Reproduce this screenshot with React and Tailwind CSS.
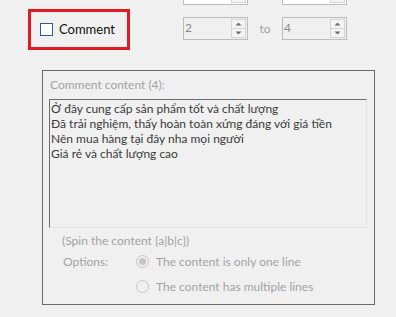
import React from 'react';

const Arrow = ({ up }) => (
  <svg width="7" height="4" viewBox="0 0 7 4" className="block">
    {up ? <path d="M0.5 3.5 L3.5 0.5 L6.5 3.5 Z" fill="#6b6b6b" /> : <path d="M0.5 0.5 L3.5 3.5 L6.5 0.5 Z" fill="#6b6b6b" />}
  </svg>
);

const SpinBox = ({ value, white }) => (
  <div className={`w-[65px] h-[23px] border border-[#bcbcbc] flex ${white ? 'bg-white' : 'bg-[#f0f0f0]'}`}>
    <div className="flex-1 pl-[1px] text-[12px] leading-[20px] text-[#8a8a8a]">{value}</div>
    <div className="w-[15px] flex flex-col my-[1px] mr-[1px] border border-[#d4d4d4]">
      <div className="flex-1 flex items-center justify-center border-b border-[#d4d4d4] bg-[#f4f4f4]">
        <Arrow up />
      </div>
      <div className="flex-1 flex items-center justify-center bg-[#f4f4f4]">
        <Arrow />
      </div>
    </div>
  </div>
);

const Radio = ({ checked, label }) => (
  <div className="flex items-center h-[15px]">
    <div className="w-[13px] h-[13px] rounded-full border border-[#c4c4c4] bg-[#f0f0f0] flex items-center justify-center">
      {checked && <div className="w-[7px] h-[7px] rounded-full bg-[#c4c4c4]" />}
    </div>
    <span className="ml-[7px] text-[12px] leading-[15px] text-[#a3a3a3]">{label}</span>
  </div>
);

const lines = [
  'Ở đây cung cấp sản phẩm tốt và chất lượng',
  'Đã trải nghiệm, thấy hoàn toàn xứng đáng với giá tiền',
  'Nên mua hàng tại đây nha mọi người',
  'Giá rẻ và chất lượng cao',
];

export default function App() {
  return (
    <div className="w-[396px] h-[317px] bg-[#f0f0f0] overflow-hidden flex flex-col font-[Lato,sans-serif]">
      <div className="-mt-[18px] h-[23px] flex pl-[183px] gap-[34px]">
        <SpinBox value="" white />
        <SpinBox value="" white />
      </div>

      <div className="flex mt-[4px]">
        <div className="ml-[28px] w-[102px] h-[41px] border-[3px] border-[#e01b22] flex items-center pl-[9px]">
          <div className="w-[13px] h-[13px] border border-[#2a6285] bg-white" />
          <span className="ml-[6px] text-[13px] text-[#111]">Comment</span>
        </div>
        <div className="ml-[53px] mt-[8px] flex items-start">
          <SpinBox value="2" />
          <span className="w-[34px] text-center text-[12px] leading-[23px] text-[#a3a3a3]">to</span>
          <SpinBox value="4" />
        </div>
      </div>

      <div className="mt-[20px] ml-[42px] w-[333px] h-[235px] border border-[#6b6b6b] flex flex-col">
        <div className="pl-[7px] pt-[6px] text-[12px] leading-[15px] text-[#a3a3a3]">Comment content (4):</div>
        <div className="mt-[7px] ml-[6px] w-[318px] h-[129px] border border-t-[#6b6b6b] border-l-[#6b6b6b] border-r-[#e3e3e3] border-b-[#e3e3e3] px-[1px] pt-[1px]">
          {lines.map((l) => (
            <div key={l} className="text-[12px] leading-[15px] text-[#3a3a3a] whitespace-nowrap">{l}</div>
          ))}
        </div>
        <div className="mt-[5px] pl-[19px] text-[12px] leading-[15px] text-[#a3a3a3]">(Spin the content {'{a|b|c}'})</div>
        <div className="mt-[6px] flex pl-[20px]">
          <span className="w-[73px] text-[12px] leading-[15px] text-[#a3a3a3]">Options:</span>
          <div className="flex flex-col gap-[10px]">
            <Radio checked label="The content is only one line" />
            <Radio label="The content has multiple lines" />
          </div>
        </div>
      </div>
    </div>
  );
}
